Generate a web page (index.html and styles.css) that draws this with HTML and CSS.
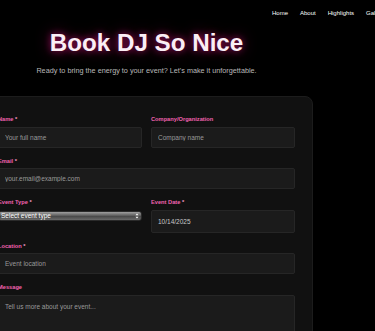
FILE: index.html
```html
<!DOCTYPE html>
<html>
<head>
    <meta charset="utf-8">
    <title>Book DJ So Nice</title>
    <link rel="stylesheet" href="styles.css">
</head>
<body>
    <nav class="site-nav">
        <a href="#">Home</a>
        <a href="#">About</a>
        <a href="#">Highlights</a>
        <a href="#">Gallery</a>
        <a href="#">Book</a>
    </nav>

    <div class="page">
        <div class="hero">
            <h1>Book DJ So Nice</h1>
            <p>Ready to bring the energy to your event? Let's make it unforgettable.</p>
        </div>

        <form class="booking-card" id="bookingForm">
            <div class="form-group">
                <label for="name">Name <span class="req">*</span></label>
                <input type="text" id="name" placeholder="Your full name">
            </div>
            <div class="form-group">
                <label for="company">Company/Organization</label>
                <input type="text" id="company" placeholder="Company name">
            </div>

            <div class="form-group full">
                <label for="email">Email <span class="req">*</span></label>
                <input type="email" id="email" placeholder="your.email@example.com">
            </div>

            <div class="form-group">
                <label for="eventType">Event Type <span class="req">*</span></label>
                <div class="select-wrap">
                    <select id="eventType">
                        <option value="">Select event type</option>
                        <option>Wedding</option>
                        <option>Birthday</option>
                        <option>Corporate</option>
                        <option>Club Night</option>
                    </select>
                    <svg class="select-arrows" width="4" height="6" viewBox="0 0 4 6">
                        <path d="M0.5 2.3 L2 0.6 L3.5 2.3 Z M0.5 3.7 L2 5.4 L3.5 3.7 Z" fill="#fff"/>
                    </svg>
                </div>
            </div>
            <div class="form-group">
                <label for="eventDate">Event Date <span class="req">*</span></label>
                <input type="text" id="eventDate" class="date-input" value="10/14/2025">
            </div>

            <div class="form-group full">
                <label for="location">Location <span class="req">*</span></label>
                <input type="text" id="location" placeholder="Event location">
            </div>

            <div class="form-group full">
                <label for="message">Message</label>
                <textarea id="message" placeholder="Tell us more about your event..."></textarea>
            </div>
        </form>
    </div>
</body>
</html>
```

FILE: styles.css
```css
body {
    margin: 0;
    background-color: #000;
    color: #fff;
    font-family: "Liberation Sans", Arial, sans-serif;
    overflow: hidden;
}

.site-nav {
    display: flex;
    gap: 12px;
    padding: 10px 0 0 272px;
    font-size: 6px;
    line-height: 7px;
    white-space: nowrap;
}

.site-nav a {
    color: #fff;
    text-decoration: none;
}

.page {
    width: 333px;
    margin-left: -20px;
}

.hero {
    text-align: center;
}

.hero h1 {
    margin: 12px 0 0;
    font-size: 24.2px;
    line-height: 28px;
    font-weight: bold;
    color: #fbeef5;
    text-shadow: 0 0 7px rgba(255, 30, 150, 0.55), 0 0 16px rgba(255, 20, 147, 0.4);
}

.hero p {
    margin: 9px 0 0;
    font-size: 7.25px;
    line-height: 10px;
    color: #b8b8b8;
}

.booking-card {
    display: grid;
    grid-template-columns: 1fr 1fr;
    column-gap: 9px;
    row-gap: 10px;
    margin-top: 20px;
    padding: 19px 17px 20px;
    background: #111;
    border: 1px solid #1c1c1c;
    border-radius: 8px;
}

.form-group {
    display: flex;
    flex-direction: column;
}

.form-group.full {
    grid-column: 1 / 3;
}

label {
    font-size: 5.7px;
    line-height: 7px;
    font-weight: bold;
    color: #f062b0;
    margin-bottom: 3.5px;
}

label .req {
    color: #f59ccd;
}

input, textarea {
    box-sizing: border-box;
    width: 100%;
    height: 21px;
    padding: 0 6px;
    margin: 0;
    background: #1b1b1b;
    border: 1px solid #262626;
    border-radius: 2px;
    color: #c8c8c8;
    font-family: "Liberation Sans", Arial, sans-serif;
    font-size: 6.5px;
}

input::placeholder, textarea::placeholder {
    color: #9a9a9a;
}

.date-input {
    height: 23px;
}

textarea {
    height: 60px;
    padding: 7px 6px;
    resize: none;
}

.select-wrap {
    position: relative;
    margin-top: 1.5px;
    line-height: 0;
}

select {
    display: block;
    appearance: none;
    -webkit-appearance: none;
    box-sizing: border-box;
    width: 100%;
    height: 10px;
    padding: 0 2px;
    background: linear-gradient(#a0a0a0, #5e5e5e 45%, #4a4a4a 55%, #6a6a6a);
    border: 1px solid #2a2a2a;
    border-radius: 3px;
    color: #fff;
    font-family: "Liberation Sans", Arial, sans-serif;
    font-size: 6.5px;
    line-height: 8px;
}

.select-arrows {
    position: absolute;
    right: 3px;
    top: 2px;
}
```
